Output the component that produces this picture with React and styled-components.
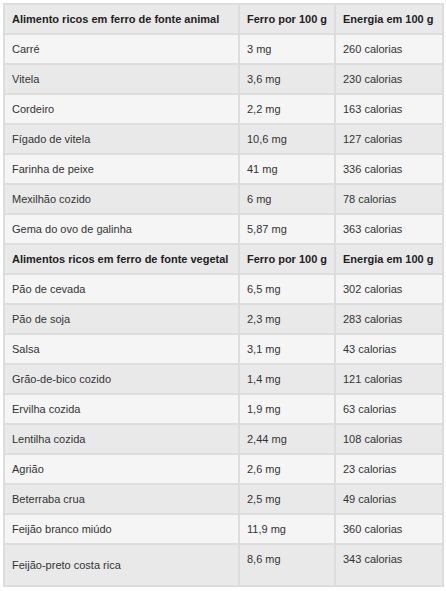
import React from 'react'
import styled, { createGlobalStyle } from 'styled-components'

const GlobalStyle = createGlobalStyle`
  body {
    margin: 0;
    background: #ffffff;
    font-family: "Liberation Sans", Arial, sans-serif;
  }
`

const Wrapper = styled.div`
  padding: 3px 4px 0 3px;
`

const Table = styled.table`
  border-collapse: collapse;
  width: 439px;
  table-layout: fixed;
  font-size: 11px;
  color: #333333;
`

const Row = styled.tr`
  background: ${({ shade }) => (shade ? '#e9e9e9' : '#f5f5f5')};
`

const Cell = styled.td`
  border: 2px solid #dddddd;
  height: 30px;
  padding: 0 7px;
  vertical-align: ${({ top }) => (top ? 'top' : 'middle')};
  padding-top: ${({ top }) => (top ? '8px' : '0')};
  font-weight: ${({ head }) => (head ? 'bold' : 'normal')};
  color: ${({ head }) => (head ? '#222222' : '#333333')};
  white-space: nowrap;
  box-sizing: border-box;
`

const TallCell = styled(Cell)`
  height: 42px;
`

const animal = [
  ['Carré', '3 mg', '260 calorias'],
  ['Vitela', '3,6 mg', '230 calorias'],
  ['Cordeiro', '2,2 mg', '163 calorias'],
  ['Fígado de vitela', '10,6 mg', '127 calorias'],
  ['Farinha de peixe', '41 mg', '336 calorias'],
  ['Mexilhão cozido', '6 mg', '78 calorias'],
  ['Gema do ovo de galinha', '5,87 mg', '363 calorias'],
]

const vegetal = [
  ['Pão de cevada', '6,5 mg', '302 calorias'],
  ['Pão de soja', '2,3 mg', '283 calorias'],
  ['Salsa', '3,1 mg', '43 calorias'],
  ['Grão-de-bico cozido', '1,4 mg', '121 calorias'],
  ['Ervilha cozida', '1,9 mg', '63 calorias'],
  ['Lentilha cozida', '2,44 mg', '108 calorias'],
  ['Agrião', '2,6 mg', '23 calorias'],
  ['Beterraba crua', '2,5 mg', '49 calorias'],
  ['Feijão branco miúdo', '11,9 mg', '360 calorias'],
]

const HeadRow = ({ title }) => (
  <Row shade>
    <Cell head>{title}</Cell>
    <Cell head>Ferro por 100 g</Cell>
    <Cell head>Energia em 100 g</Cell>
  </Row>
)

const App = () => {
  return (
    <Wrapper>
      <GlobalStyle />
      <Table>
        <colgroup>
          <col style={{ width: 235 }} />
          <col style={{ width: 96 }} />
          <col style={{ width: 108 }} />
        </colgroup>
        <tbody>
          <HeadRow title="Alimento ricos em ferro de fonte animal" />
          {animal.map((r, i) => (
            <Row key={r[0]} shade={i % 2 === 1}>
              <Cell>{r[0]}</Cell>
              <Cell>{r[1]}</Cell>
              <Cell>{r[2]}</Cell>
            </Row>
          ))}
          <HeadRow title="Alimentos ricos em ferro de fonte vegetal" />
          {vegetal.map((r, i) => (
            <Row key={r[0]} shade={i % 2 === 1}>
              <Cell>{r[0]}</Cell>
              <Cell>{r[1]}</Cell>
              <Cell>{r[2]}</Cell>
            </Row>
          ))}
          <Row shade>
            <TallCell>Feijão-preto costa rica</TallCell>
            <TallCell top>8,6 mg</TallCell>
            <TallCell top>343 calorias</TallCell>
          </Row>
        </tbody>
      </Table>
    </Wrapper>
  )
}

export default App
